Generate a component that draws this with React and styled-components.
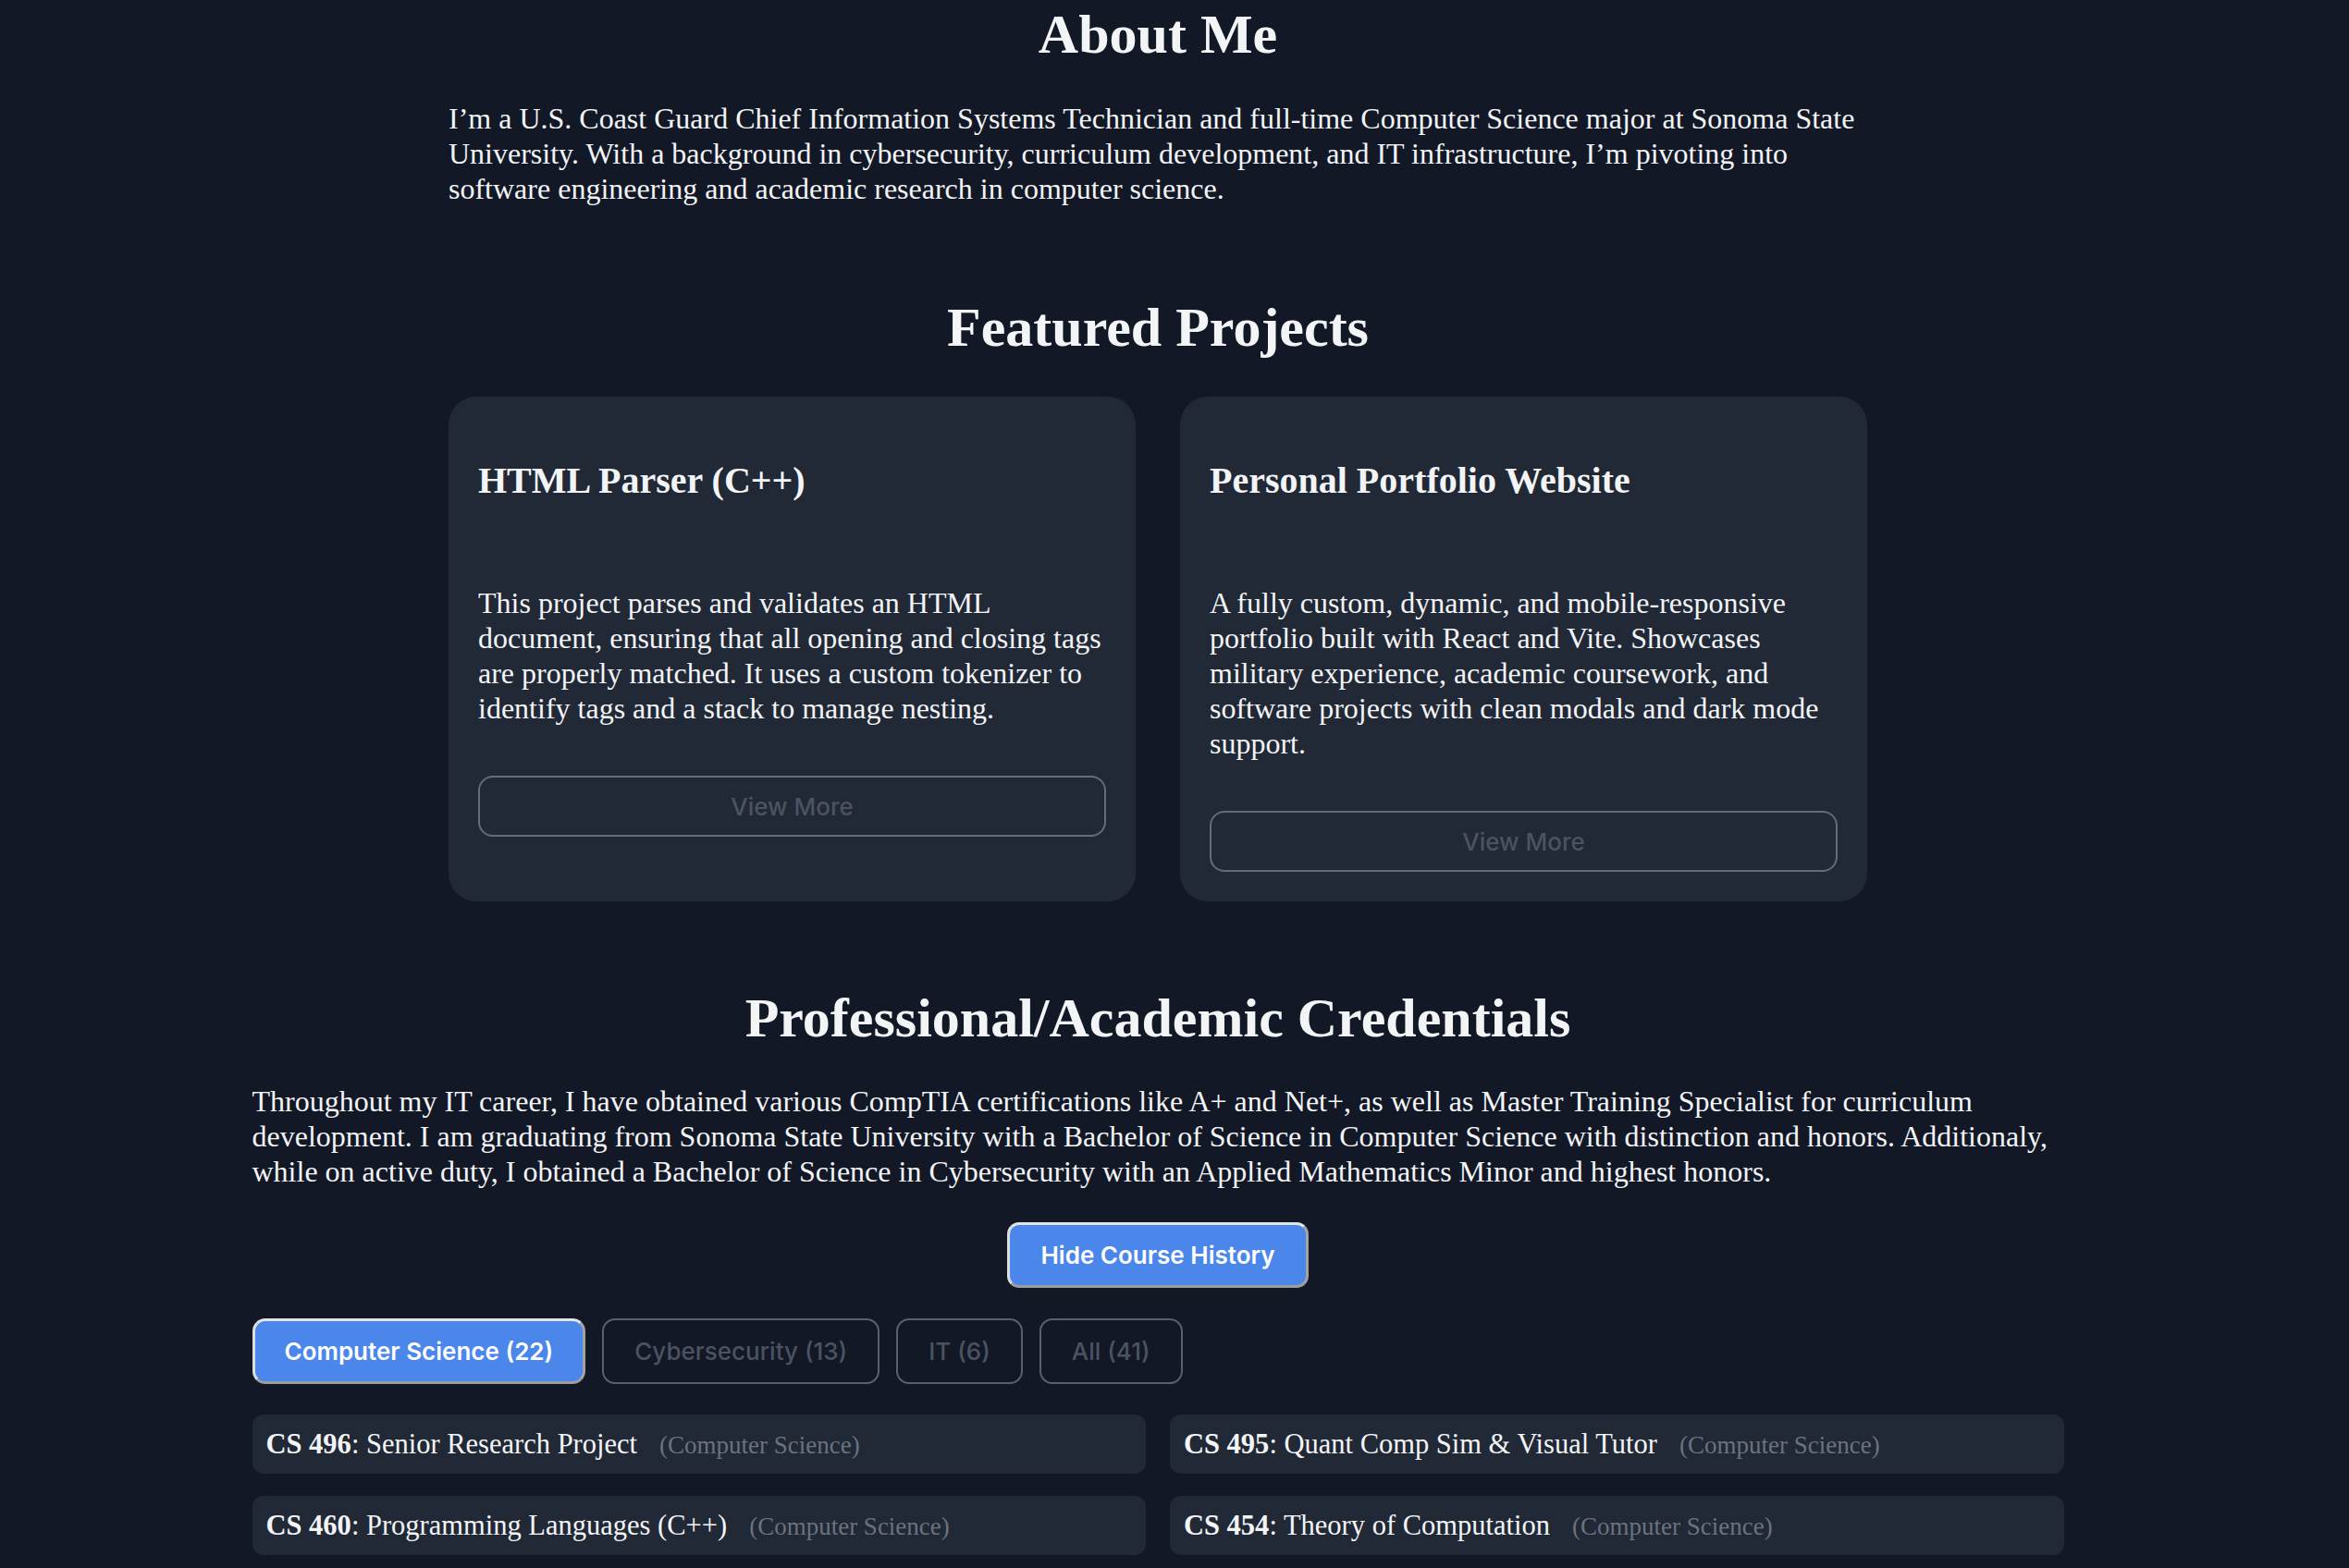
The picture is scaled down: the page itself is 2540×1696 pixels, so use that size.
import React, { useState } from "react";
import styled, { createGlobalStyle } from "styled-components";

const Global = createGlobalStyle`
  html, body {
    margin: 0;
    padding: 0;
    background: #121826;
  }
  body {
    font-family: "Liberation Serif", "Times New Roman", serif;
    color: #f3f4f6;
  }
  * { box-sizing: border-box; }
`;

const Page = styled.div`
  width: 2504px;
  min-height: 100vh;
  padding-top: 3px;
  padding-bottom: 80px;
`;

const Narrow = styled.section`
  width: 1534px;
  margin: 0 auto;
`;

const Wide = styled.section`
  width: 1959px;
  margin: 0 auto;
`;

const Heading = styled.h1`
  margin: ${(p) => p.$top || 0}px 0 0;
  font-size: 60px;
  font-weight: 700;
  line-height: 69px;
  text-align: center;
  color: #f3f4f6;
`;

const Para = styled.p`
  margin: ${(p) => p.$top || 0}px 0 0;
  font-size: 32px;
  line-height: 38px;
  color: #f3f4f6;
`;

const CardGrid = styled.div`
  margin-top: 40px;
  display: grid;
  grid-template-columns: 1fr 1fr;
  gap: 48px;
`;

const Card = styled.article`
  background: #212836;
  border-radius: 30px;
  padding: 32px;
  display: flex;
  flex-direction: column;
  align-items: stretch;
`;

const CardTitle = styled.h3`
  margin: 36px 0 0;
  font-size: 40px;
  line-height: 46px;
  font-weight: 700;
  color: #f3f4f6;
`;

const CardText = styled.p`
  margin: 90px 0 0;
  font-size: 32px;
  line-height: 38px;
  color: #f3f4f6;
`;

const OutlineButton = styled.button`
  margin-top: 54px;
  height: 66px;
  width: 100%;
  background: transparent;
  border: 2px solid #646b79;
  border-radius: 16px;
  color: #4b5361;
  font-family: Inter, "Noto Sans", sans-serif;
  font-size: 26px;
  font-weight: 500;
  cursor: pointer;
`;

const Center = styled.div`
  margin-top: 36px;
  display: flex;
  justify-content: center;
`;

const PrimaryButton = styled.button`
  height: 71px;
  padding: 0 33px;
  background: #4b86ea;
  border: 3px solid;
  border-color: #e4e4e4 #a4a4a4 #9d9d9d #dedede;
  border-radius: 13px;
  color: #ffffff;
  font-family: Inter, "Noto Sans", sans-serif;
  font-size: 26px;
  font-weight: 600;
  cursor: pointer;
`;

const Tabs = styled.div`
  margin-top: 33px;
  display: flex;
  gap: 18px;
`;

const Tab = styled.button`
  height: 71px;
  padding: 0 ${(p) => (p.$active ? 32 : 33)}px;
  border-radius: 14px;
  font-family: Inter, "Noto Sans", sans-serif;
  font-size: 26px;
  font-weight: ${(p) => (p.$active ? 600 : 500)};
  cursor: pointer;
  background: ${(p) => (p.$active ? "#4b86ea" : "transparent")};
  color: ${(p) => (p.$active ? "#ffffff" : "#4b5361")};
  border: ${(p) => (p.$active ? "3px" : "2px")} solid;
  border-color: ${(p) =>
    p.$active ? "#e4e4e4 #a4a4a4 #9d9d9d #dedede" : "#5a616e"};
`;

const CourseGrid = styled.ul`
  list-style: none;
  margin: 33px 0 0;
  padding: 0;
  display: grid;
  grid-template-columns: 1fr 1fr;
  column-gap: 26px;
  row-gap: 24px;
`;

const Course = styled.li`
  background: #212836;
  border-radius: 12px;
  padding: 15px 15px 13px;
  font-size: 30.5px;
  line-height: 35px;
  color: #f3f4f6;
  white-space: nowrap;
`;

const Code = styled.strong`
  font-weight: 700;
`;

const Dept = styled.span`
  margin-left: 24px;
  font-size: 27px;
  color: #6b7280;
`;

const projects = [
  {
    title: "HTML Parser (C++)",
    text:
      "This project parses and validates an HTML document, ensuring that all opening and closing tags are properly matched. It uses a custom tokenizer to identify tags and a stack to manage nesting.",
  },
  {
    title: "Personal Portfolio Website",
    text:
      "A fully custom, dynamic, and mobile-responsive portfolio built with React and Vite. Showcases military experience, academic coursework, and software projects with clean modals and dark mode support.",
  },
];

const tabs = [
  { key: "cs", label: "Computer Science (22)" },
  { key: "cyber", label: "Cybersecurity (13)" },
  { key: "it", label: "IT (6)" },
  { key: "all", label: "All (41)" },
];

const courses = [
  { code: "CS 496", name: "Senior Research Project" },
  { code: "CS 495", name: "Quant Comp Sim & Visual Tutor" },
  { code: "CS 460", name: "Programming Languages (C++)" },
  { code: "CS 454", name: "Theory of Computation" },
  { code: "CS 450", name: "Operating Systems" },
  { code: "CS 415", name: "Algorithm Analysis" },
];

export default function App() {
  const [active, setActive] = useState("cs");
  return (
    <>
      <Global />
      <Page>
        <Narrow>
          <Heading>About Me</Heading>
          <Para $top={37}>
            I’m a U.S. Coast Guard Chief Information Systems Technician and
            full-time Computer Science major at Sonoma State University. With a
            background in cybersecurity, curriculum development, and IT
            infrastructure, I’m pivoting into software engineering and academic
            research in computer science.
          </Para>
          <Heading $top={97}>Featured Projects</Heading>
          <CardGrid>
            {projects.map((p) => (
              <Card key={p.title}>
                <CardTitle>{p.title}</CardTitle>
                <CardText>{p.text}</CardText>
                <OutlineButton>View More</OutlineButton>
              </Card>
            ))}
          </CardGrid>
        </Narrow>
        <Wide>
          <Heading $top={92}>Professional/Academic Credentials</Heading>
          <Para $top={36}>
            Throughout my IT career, I have obtained various CompTIA
            certifications like A+ and Net+, as well as Master Training
            Specialist for curriculum development. I am graduating from Sonoma
            State University with a Bachelor of Science in Computer Science with
            distinction and honors. Additionaly, while on active duty, I
            obtained a Bachelor of Science in Cybersecurity with an Applied
            Mathematics Minor and highest honors.
          </Para>
          <Center>
            <PrimaryButton>Hide Course History</PrimaryButton>
          </Center>
          <Tabs>
            {tabs.map((t) => (
              <Tab
                key={t.key}
                $active={active === t.key}
                onClick={() => setActive(t.key)}
              >
                {t.label}
              </Tab>
            ))}
          </Tabs>
          <CourseGrid>
            {courses.map((c) => (
              <Course key={c.code}>
                <Code>{c.code}</Code>: {c.name}
                <Dept>(Computer Science)</Dept>
              </Course>
            ))}
          </CourseGrid>
        </Wide>
      </Page>
    </>
  );
}
